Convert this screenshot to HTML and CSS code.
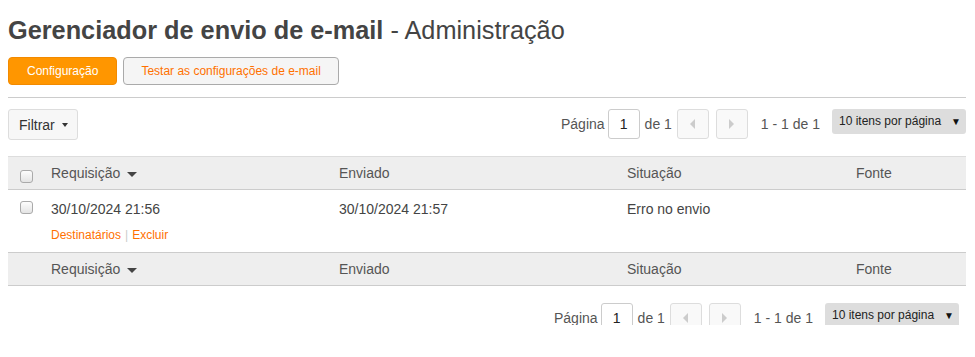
FILE: index.html
```html
<!doctype html>
<html lang="pt-BR">
    <head>
        <meta charset="UTF-8" />
        <title>Gerenciador de envio de e-mail - Administração</title>
        <link rel="stylesheet" href="styles.css">
    </head>
    <body>
        <div class="page">
            <h1 class="title"><strong>Gerenciador de envio de e-mail</strong> - Administração</h1>

            <div class="actions">
                <button class="btn btn-primary">Configuração</button>
                <button class="btn btn-default">Testar as configurações de e-mail</button>
            </div>

            <hr class="divider" />

            <!-- Toolbar: filter + pagination -->
            <div class="toolbar">
                <button class="filter-btn">Filtrar <span class="caret"></span></button>
                <div class="pager">
                    <span class="pager-text">Página</span>
                    <span class="page-input">1</span>
                    <span class="pager-text pager-of">de 1</span>
                    <span class="page-nav"><span class="arrow-left"></span></span>
                    <span class="page-nav page-next"><span class="arrow-right"></span></span>
                    <span class="pager-text pager-range">1 - 1 de 1</span>
                    <span class="page-size">10 itens por página <span class="size-arrow">▼</span></span>
                </div>
            </div>

            <table class="grid">
                <colgroup>
                    <col class="col-check" />
                    <col class="col-wide" />
                    <col class="col-wide" />
                    <col class="col-mid" />
                    <col />
                </colgroup>
                <thead>
                    <tr>
                        <th><span class="checkbox head-check"></span></th>
                        <th>Requisição <span class="sort-caret"></span></th>
                        <th>Enviado</th>
                        <th>Situação</th>
                        <th>Fonte</th>
                    </tr>
                </thead>
                <tbody>
                    <tr>
                        <td><span class="checkbox"></span></td>
                        <td>
                            30/10/2024 21:56
                            <div class="row-links">
                                <a href="#">Destinatários</a><span class="sep">|</span><a href="#">Excluir</a>
                            </div>
                        </td>
                        <td>30/10/2024 21:57</td>
                        <td>Erro no envio</td>
                        <td></td>
                    </tr>
                </tbody>
                <tfoot>
                    <tr>
                        <th></th>
                        <th>Requisição <span class="sort-caret"></span></th>
                        <th>Enviado</th>
                        <th>Situação</th>
                        <th>Fonte</th>
                    </tr>
                </tfoot>
            </table>

            <div class="toolbar toolbar-bottom">
                <div class="pager">
                    <span class="pager-text">Página</span>
                    <span class="page-input">1</span>
                    <span class="pager-text pager-of">de 1</span>
                    <span class="page-nav"><span class="arrow-left"></span></span>
                    <span class="page-nav page-next"><span class="arrow-right"></span></span>
                    <span class="pager-text pager-range">1 - 1 de 1</span>
                    <span class="page-size">10 itens por página <span class="size-arrow">▼</span></span>
                </div>
            </div>
        </div>
    </body>
</html>
```

FILE: styles.css
```css
:root {
    --text: #444;
    --text-dark: #444;
    --orange: #ff9600;
    --orange-dark: #f28a00;
    --orange-link: #ff7100;
    --gray-border: #ccc;
    --gray-head: #eee;
}

body {
    margin: 0;
    font-family: "Liberation Sans", Arial, sans-serif;
    color: var(--text);
    background: white;
}
.page {
    padding: 0 9px 0 8px;
    height: 325px;
    overflow: hidden;
}
.title {
    font-size: 25.3px;
    line-height: 30px;
    font-weight: normal;
    margin: 0;
    padding: 15px 0 12px;
    color: #444;
}
.title strong {
    font-weight: bold;
}
.actions {
    display: flex;
    gap: 6px;
}
.btn {
    font-family: inherit;
    font-size: 12px;
    height: 28px;
    padding: 0 18px;
    border-radius: 4px;
    cursor: pointer;
}
.btn-primary {
    background: var(--orange);
    border: 1px solid var(--orange-dark);
    color: white;
}
.btn-default {
    padding: 0 17px;
    background: #f5f5f5;
    border: 1px solid #aaa;
    color: var(--orange-link);
}
.divider {
    border: none;
    border-top: 1px solid var(--gray-border);
    margin: 12px 0 11px;
}

/* Toolbar */
.toolbar {
    display: flex;
    justify-content: space-between;
    align-items: flex-start;
}
.filter-btn {
    font-family: inherit;
    font-size: 14px;
    color: #333;
    height: 31px;
    padding: 0 9px 0 10px;
    background: #f7f7f7;
    border: 1px solid #ddd;
    border-radius: 3px;
    display: flex;
    align-items: center;
    gap: 6px;
}
.caret {
    display: inline-block;
    border-left: 3px solid transparent;
    border-right: 3px solid transparent;
    border-top: 4px solid #333;
    margin-left: 1px;
}
.pager {
    display: flex;
    align-items: flex-start;
    font-size: 14px;
    color: #555;
}
.pager-text {
    line-height: 30px;
}
.page-input {
    width: 30px;
    height: 28px;
    line-height: 28px;
    margin-left: 3px;
    text-align: center;
    border: 1px solid var(--gray-border);
    border-radius: 3px;
    color: #222;
}
.pager-of {
    margin: 0 5px;
}
.page-nav {
    width: 30px;
    height: 28px;
    border: 1px solid #ddd;
    border-radius: 3px;
    background: #f9f9f9;
    display: flex;
    align-items: center;
    justify-content: center;
}
.page-next {
    margin-left: 7px;
}
.arrow-left {
    border-top: 5px solid transparent;
    border-bottom: 5px solid transparent;
    border-right: 5px solid #ccc;
}
.arrow-right {
    border-top: 5px solid transparent;
    border-bottom: 5px solid transparent;
    border-left: 5px solid #ccc;
}
.pager-range {
    margin: 0 12px 0 13px;
}
.page-size {
    width: 134px;
    height: 25px;
    box-sizing: border-box;
    padding: 0 5px 0 7px;
    background: #ddd;
    border-radius: 3px;
    font-size: 12px;
    line-height: 25px;
    color: #222;
    display: flex;
    justify-content: space-between;
}
.size-arrow {
    font-size: 10px;
    color: #111;
}

/* Grid */
.grid {
    width: 100%;
    border-collapse: collapse;
    margin-top: 16px;
    font-size: 14px;
}
.col-check {
    width: 43px;
}
.col-wide {
    width: 288px;
}
.col-mid {
    width: 229px;
}
.grid th {
    background: var(--gray-head);
    font-weight: normal;
    text-align: left;
    line-height: 20px;
    padding: 6px 0;
    color: #555;
}
.grid thead th {
    border-top: 1px solid #ddd;
    border-bottom: 1px solid var(--gray-border);
}
.grid tfoot th {
    border-top: 1px solid var(--gray-border);
    border-bottom: 1px solid var(--gray-border);
}
.grid td {
    vertical-align: top;
    line-height: 20px;
    padding: 9px 0;
    color: var(--text-dark);
}
.checkbox {
    display: block;
    width: 11px;
    height: 11px;
    margin-left: 12px;
    border: 1px solid #aaa;
    border-radius: 3px;
    background: linear-gradient(#fdfdfd, #e4e4e4);
}
.grid td .checkbox {
    margin-top: 2px;
}
.head-check {
    margin-top: 6px;
}
.sort-caret {
    display: inline-block;
    vertical-align: middle;
    margin-left: 3px;
    border-left: 5px solid transparent;
    border-right: 5px solid transparent;
    border-top: 5px solid #444;
}
.row-links {
    margin-top: 8px;
    font-size: 12px;
    line-height: 16px;
}
.row-links a {
    color: var(--orange-link);
    text-decoration: none;
}
.sep {
    color: #ccc;
    margin: 0 4px;
}
.toolbar-bottom {
    justify-content: flex-end;
    margin: 17px 7px 0 0;
}
```
